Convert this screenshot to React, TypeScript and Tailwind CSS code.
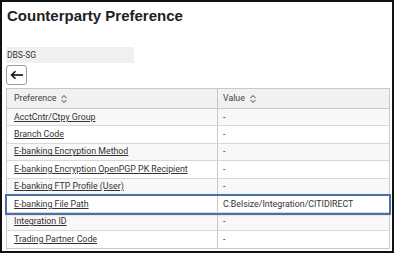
import * as React from 'react';

const rows: { name: string; value: string }[] = [
  { name: 'AcctCntr/Ctpy Group', value: '-' },
  { name: 'Branch Code', value: '-' },
  { name: 'E-banking Encryption Method', value: '-' },
  { name: 'E-banking Encryption OpenPGP PK Recipient', value: '-' },
  { name: 'E-banking FTP Profile (User)', value: '-' },
  { name: 'E-banking File Path', value: 'C:Belsize/Integration/CITIDIRECT' },
  { name: 'Integration ID', value: '-' },
  { name: 'Trading Partner Code', value: '-' },
];

const SortIcon = () => (
  <svg width="8" height="10" viewBox="0 0 8 10" className="ml-1 inline-block" fill="none" stroke="#8a8a8a" strokeWidth="1.2">
    <path d="M1.5 4 L4 1.5 L6.5 4" />
    <path d="M1.5 6 L4 8.5 L6.5 6" />
  </svg>
);

export default function App() {
  return (
    <div className="w-[394px] h-[253px] bg-white border-2 border-[#111] overflow-hidden" style={{ fontFamily: 'Roboto, "Liberation Sans", sans-serif' }}>
      <div className="px-[4px] pt-[4px]">
        <h1 className="text-[15px] font-bold text-[#222] leading-[20px] pl-[1px]" style={{ fontFamily: '"Liberation Sans", Arial, sans-serif' }}>
          Counterparty Preference
        </h1>
        <div className="mt-[21px] w-[128px] h-[16px] bg-[#f0f0f0] text-[8.5px] leading-[16px] text-[#333] pl-[1px]">DBS-SG</div>
        <button className="mt-[2px] w-[21px] h-[20px] border border-[#9a9a9a] rounded-[3px] flex items-center justify-center bg-white">
          <svg width="14" height="10" viewBox="0 0 14 10" fill="none" stroke="#111" strokeWidth="1.6">
            <path d="M13 5 H2" />
            <path d="M5.5 1.2 L1.6 5 L5.5 8.8" />
          </svg>
        </button>
        <div className="mt-[3px] w-[384px] border border-[#c8c8c8]">
          <div className="grid grid-cols-[211px_1fr] h-[20px] bg-[#f1f1f1] border-b border-[#c8c8c8] text-[8.8px] text-[#444] items-center">
            <div className="pl-[7px] flex items-center border-r border-[#c8c8c8] h-full">Preference <SortIcon /></div>
            <div className="pl-[5px] flex items-center">Value <SortIcon /></div>
          </div>
          {rows.map((r, i) => {
            const selected = r.name === 'E-banking File Path';
            return (
              <div
                key={r.name}
                className={
                  'grid grid-cols-[211px_1fr] h-[17.4px] text-[8.8px] text-[#333] items-center ' +
                  (i % 2 === 0 ? 'bg-[#f8f8f8] ' : 'bg-white ') +
                  (i < rows.length - 1 ? 'border-b border-[#d8d8d8] ' : '') +
                  (selected ? 'relative outline-2 outline-[#4a70a6] shadow-[0_1px_3px_rgba(0,0,0,0.35)] z-10' : '')
                }
              >
                <div className="pl-[7px] border-r border-[#c8c8c8] h-full flex items-center">
                  <span className="underline underline-offset-1">{r.name}</span>
                </div>
                <div className="pl-[5px] flex items-center">{r.value}</div>
              </div>
            );
          })}
        </div>
      </div>
    </div>
  );
}
